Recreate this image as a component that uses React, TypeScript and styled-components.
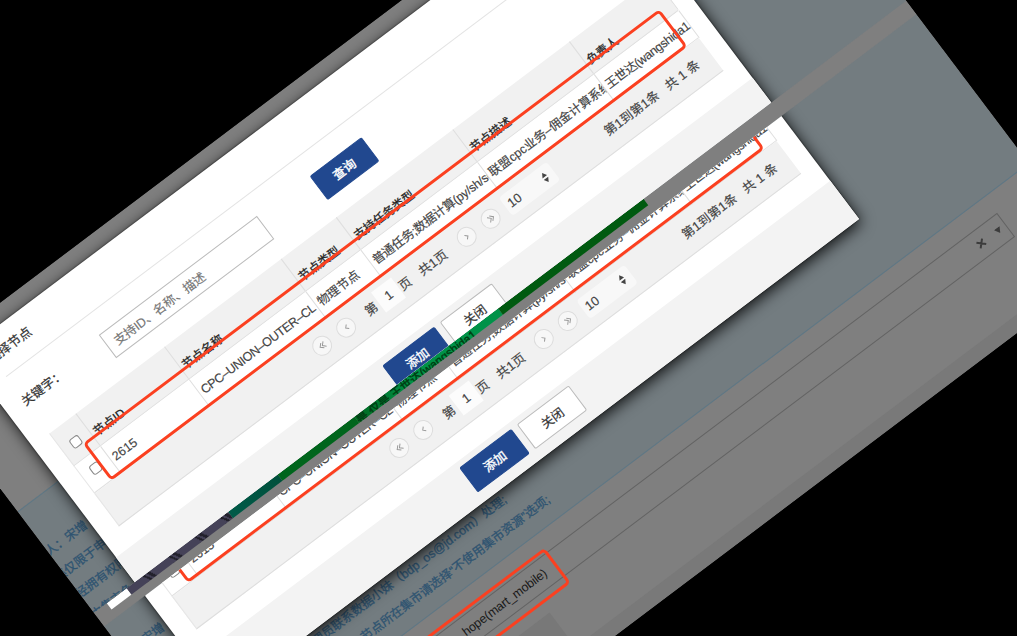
import React from "react";
import styled, { createGlobalStyle } from "styled-components";

const GlobalStyle = createGlobalStyle`
  html, body { margin: 0; padding: 0; background: #000; overflow: hidden; }
  * { box-sizing: border-box; }
`;

const Canvas = styled.main`
  width: 1017px;
  height: 636px;
  overflow: hidden;
  background: #000;
  font-family: "Liberation Sans", "Noto Sans CJK SC", sans-serif;
  font-size: 13px;
  color: #333;
`;

const Sheet = styled.div`
  display: flex;
  flex-direction: column;
  width: 1017px;
  height: 636px;
  overflow: hidden;
  transform: rotate(-37deg);
  background: #7f7f7f;
`;

const Slice = styled.section<{ $height: number }>`
  flex: none;
  height: ${(p) => p.$height}px;
  overflow: hidden;
`;

const Screen = styled.div<{ $shift?: number }>`
  position: relative;
  display: flex;
  flex-direction: column;
  height: 520px;
  margin-top: ${(p) => -(p.$shift ?? 0)}px;
`;

const PageTop = styled.div`
  height: 177px;
  background: #7f7f7f;
`;

const Notice = styled.div`
  height: 202px;
  padding-top: 36.5px;
  background: #737c80;
  border-top: 1px solid #5e7785;
  border-bottom: 1px solid #5e7785;
  color: #2f5471;
  font-size: 12.3px;
  -webkit-text-stroke: 0.3px #2f5471;
`;

const NoticeLine = styled.p<{ $indent: number }>`
  margin: 0;
  height: 26px;
  line-height: 26px;
  white-space: pre;
  text-indent: ${(p) => p.$indent}px;
`;

const MarketRow = styled.div`
  padding: 20px 55px 0 0;
`;

const MarketSelect = styled.div`
  display: flex;
  align-items: center;
  height: 30px;
  padding: 0 5px 0 282px;
  border: 1px solid #636363;
  color: #191919;
  font-size: 12.5px;
  letter-spacing: -0.15px;
`;

const Clear = styled.svg`
  width: 10px;
  height: 10px;
  margin-left: auto;
`;

const Caret = styled.svg`
  width: 7px;
  height: 6px;
  margin-left: 13px;
`;

const TabBlock = styled.div`
  width: 364px;
  height: 43px;
  margin-top: 20px;
  background: #787878;
`;

const PageBottom = styled.div`
  height: 24px;
  background: #797979;
`;

const Dialog = styled.div`
  position: absolute;
  left: 51px;
  top: 17px;
  width: 796.5px;
  height: 304px;
  display: flex;
  flex-direction: column;
  background: #fff;
  box-shadow: 0 4px 15px rgba(0, 0, 0, 0.85), 0 0 2px rgba(0, 0, 0, 0.8);
`;

const DialogTitle = styled.h1`
  margin: 0 21px;
  height: 46px;
  line-height: 46px;
  text-indent: -4px;
  border-bottom: 1px solid #e3e3e3;
  font-size: 12.8px;
  font-weight: 400;
  -webkit-text-stroke: 0.2px #333;
`;

const SearchRow = styled.div`
  display: flex;
  align-items: flex-start;
  height: 70.5px;
  padding: 21.5px 0 0 18.5px;
`;

const Label = styled.label`
  width: 101.5px;
  font-size: 12.6px;
  line-height: 18px;
  -webkit-text-stroke: 0.2px #333;
`;

const SearchBox = styled.div`
  width: 197.5px;
  height: 29px;
  padding-left: 8px;
  line-height: 30px;
  border: 1px solid #bbb;
  color: #757575;
  font-size: 12.5px;
  letter-spacing: -0.15px;
  -webkit-text-stroke: 0.15px #757575;
`;

const Button = styled.button<{ $primary?: boolean; $gap?: number }>`
  width: 65px;
  height: 30.5px;
  margin-left: ${(p) => p.$gap ?? 0}px;
  padding: 0;
  border: 1px solid ${(p) => (p.$primary ? "#21488f" : "#bbb")};
  border-radius: 2px;
  background: ${(p) => (p.$primary ? "#21488f" : "#fff")};
  color: ${(p) => (p.$primary ? "#fff" : "#333")};
  font: inherit;
  font-size: 12.6px;
  -webkit-text-stroke: ${(p) => (p.$primary ? "0.4px #fff" : "0.2px #333")};
`;

const Table = styled.div`
  position: relative;
  width: 756.5px;
  margin-left: 21px;
`;

const Row = styled.div<{ $head?: boolean }>`
  display: grid;
  grid-template-columns: 33px 111px 146px 69px 145.5px 146px 106px;
  height: ${(p) => (p.$head ? 41 : 34.5)}px;
  background: ${(p) => (p.$head ? "#f1f1f1" : "#fff")};
  border-bottom: 1px solid #e0e0e0;
  border-left: 1px solid #e6e6e6;
  line-height: ${(p) => (p.$head ? 55 : 34.5)}px;
  color: ${(p) => (p.$head ? "#222" : "#444")};
  -webkit-text-stroke: ${(p) => (p.$head ? "0.25px #222" : "0.15px #444")};
`;

const Cell = styled.div<{ $size?: number; $track?: number; $open?: boolean }>`
  padding-left: 3px;
  overflow: ${(p) => (p.$open ? "visible" : "hidden")};
  white-space: nowrap;
  border-right: 1px solid #dedede;
  font-size: ${(p) => p.$size ?? 12}px;
  letter-spacing: ${(p) => p.$track ?? 0}px;
`;

const CheckCell = styled.div<{ $top: number }>`
  padding: ${(p) => p.$top}px 0 0 9.5px;
  border-right: 1px solid #dedede;
  line-height: 0;
`;

const Check = styled.span`
  display: inline-block;
  width: 11.5px;
  height: 11.5px;
  border: 1px solid #888;
  border-radius: 3px;
  background: #fff;
`;

const Highlight = styled.div<{ $x: number; $y: number; $w: number; $h: number }>`
  position: absolute;
  left: ${(p) => p.$x}px;
  top: ${(p) => p.$y}px;
  width: ${(p) => p.$w}px;
  height: ${(p) => p.$h}px;
  border: 3px solid #fb4020;
  border-radius: 5px;
`;

const Pager = styled.div`
  display: flex;
  align-items: center;
  height: 41px;
  padding: 0 0 3px 260px;
  background: #f1f1f1;
  border-bottom: 1px solid #ddd;
  border-left: 1px solid #e6e6e6;
  color: #444;
  font-size: 12.8px;
  white-space: pre;
  -webkit-text-stroke: 0.15px #444;
`;

const Round = styled.span<{ $gap?: number }>`
  display: flex;
  align-items: center;
  justify-content: center;
  flex: none;
  width: 20px;
  height: 20px;
  margin-left: ${(p) => p.$gap ?? 0}px;
  border: 1px solid #ddd;
  border-radius: 50%;
  background: #f7f7f7;
`;

const PagerText = styled.span<{ $gap: number; $w?: number }>`
  flex: none;
  margin-left: ${(p) => p.$gap}px;
  width: ${(p) => (p.$w ? p.$w + "px" : "auto")};
`;

const PageInput = styled.span`
  flex: none;
  width: 25px;
  height: 25px;
  margin-left: 3px;
  line-height: 25px;
  text-align: center;
  background: #fcfcfc;
`;

const SizeSelect = styled.span`
  display: flex;
  align-items: center;
  justify-content: space-between;
  flex: none;
  width: 60px;
  height: 23px;
  margin-left: 9px;
  padding: 0 7px 0 4px;
  border-radius: 4px;
  background: #f8f8f8;
`;

const DialogFooter = styled.div`
  display: flex;
  align-items: flex-start;
  margin-top: auto;
  height: 48px;
  padding: 6.5px 0 0 328px;
  background: #f3f3f3;
`;

const Band = styled.div`
  display: flex;
  align-items: flex-start;
  flex: none;
  height: 17.5px;
  padding-left: 16px;
  background: #7f7f7f;
`;

const Strip = styled.div<{ $w: number; $bg: string }>`
  flex: none;
  width: ${(p) => p.$w}px;
  height: 8.5px;
  overflow: hidden;
  background: ${(p) => p.$bg};
  color: #003d12;
  font-size: 12px;
  line-height: 13px;
  white-space: nowrap;
  -webkit-text-stroke: 0.4px #003d12;
`;

const speckle =
  "repeating-linear-gradient(60deg, transparent 0 21px, rgba(0,0,0,0.55) 21px 23px, transparent 23px 25px, rgba(0,0,0,0.5) 25px 28px)";

function Chevron({ dir, twice }: { dir: "l" | "r"; twice?: boolean }) {
  return (
    <svg
      width="9"
      height="8"
      viewBox="0 0 9 8"
      fill="none"
      stroke="#999"
      transform={dir === "r" ? "scale(-1 1)" : undefined}
    >
      {twice ? <path d="M4.5 1 L1.5 4 L4.5 7 M7.3 1 L4.3 4 L7.3 7" /> : <path d="M6 1.5 L3.5 4 L6 6.5" />}
    </svg>
  );
}

function NodeDialog() {
  return (
    <Dialog>
      <DialogTitle>选择节点</DialogTitle>
      <SearchRow>
        <Label>关键字：</Label>
        <SearchBox>支持ID、名称、描述</SearchBox>
        <Button $primary $gap={66}>查询</Button>
      </SearchRow>
      <Table>
        <Row $head>
          <CheckCell $top={17}><Check /></CheckCell>
          <Cell>节点ID</Cell>
          <Cell>节点名称</Cell>
          <Cell>节点类型</Cell>
          <Cell>支持任务类型</Cell>
          <Cell>节点描述</Cell>
          <Cell>负责人</Cell>
        </Row>
        <Row>
          <CheckCell $top={9}><Check /></CheckCell>
          <Cell $size={12.5}>2615</Cell>
          <Cell $size={12.5} $track={-0.4}>CPC–UNION–OUTER–CL</Cell>
          <Cell $size={12.3}>物理节点</Cell>
          <Cell $size={12.5} $track={-0.35}>普通任务;数据计算(py/sh/sql)</Cell>
          <Cell $size={12.5} $track={-0.1}>联盟cpc业务–佣金计算系统</Cell>
          <Cell $size={12.5} $track={-0.45} $open>王世达(wangshida1</Cell>
        </Row>
        <Pager>
          <Round><Chevron dir="l" twice /></Round>
          <Round $gap={10}><Chevron dir="l" /></Round>
          <PagerText $gap={15} $w={13}>第</PagerText>
          <PageInput>1</PageInput>
          <PagerText $gap={1} $w={13}>页</PagerText>
          <PagerText $gap={12} $w={34}>共1页</PagerText>
          <Round $gap={15}><Chevron dir="r" /></Round>
          <Round $gap={10}><Chevron dir="r" twice /></Round>
          <SizeSelect>
            10
            <svg width="7" height="12" viewBox="0 0 7 12" fill="#444">
              <path d="M3.5 0.5 L6.3 5 H0.7 Z M3.5 11.5 L0.7 7 H6.3 Z" />
            </svg>
          </SizeSelect>
          <PagerText $gap={64.5} $w={76}>第1到第1条</PagerText>
          <PagerText $gap={0}>共 1 条</PagerText>
        </Pager>
        <Highlight $x={21} $y={28.5} $w={722} $h={46.5} />
      </Table>
      <DialogFooter>
        <Button $primary>添加</Button>
        <Button $gap={7}>关闭</Button>
      </DialogFooter>
    </Dialog>
  );
}

function PageScreen({ shift }: { shift?: number }) {
  return (
    <Screen $shift={shift}>
      <PageTop />
      <Notice>
        <NoticeLine $indent={-2}>人：宋增</NoticeLine>
        <NoticeLine $indent={-10}>集仅限于申</NoticeLine>
        <NoticeLine $indent={-3}>经拥有权限</NoticeLine>
        <NoticeLine $indent={-3}>由集市负</NoticeLine>
        <NoticeLine $indent={145}>管理员联系数据小妹（bdp_os@jd.com）处理;</NoticeLine>
        <NoticeLine $indent={199}>节点所在集市请选择“不使用集市资源”选项;</NoticeLine>
      </Notice>
      <MarketRow>
        <MarketSelect>
          hope(mart_mobile)
          <Clear viewBox="0 0 10 10" stroke="#3c3c3c" strokeWidth="2">
            <path d="M1.5 1.5 L8.5 8.5 M8.5 1.5 L1.5 8.5" />
          </Clear>
          <Caret viewBox="0 0 7 6" fill="#3c3c3c">
            <path d="M0 0 H7 L3.5 6 Z" />
          </Caret>
        </MarketSelect>
      </MarketRow>
      <TabBlock />
      <PageBottom />
      <Highlight $x={120} $y={394.5} $w={279} $h={44} />
      <NodeDialog />
    </Screen>
  );
}

export default function App() {
  return (
    <>
      <GlobalStyle />
      <Canvas>
        <Sheet>
          <Slice $height={303.5}>
            <PageScreen />
          </Slice>
          <Band>
            <Strip $w={25} $bg="#fff" />
            <Strip $w={127} $bg={`${speckle}, #454258`} />
            <Strip $w={62} $bg="linear-gradient(90deg, #005a48, #00503c)" />
            <Strip $w={96} $bg="#00651c" />
            <Strip $w={180} $bg="linear-gradient(90deg, #006a22, #009248 40%)">
              是 仅是 王世达(wangshida1
            </Strip>
            <Strip $w={182} $bg="#005a10" />
          </Band>
          <Slice $height={315}>
            <PageScreen shift={192.5} />
          </Slice>
        </Sheet>
      </Canvas>
    </>
  );
}
